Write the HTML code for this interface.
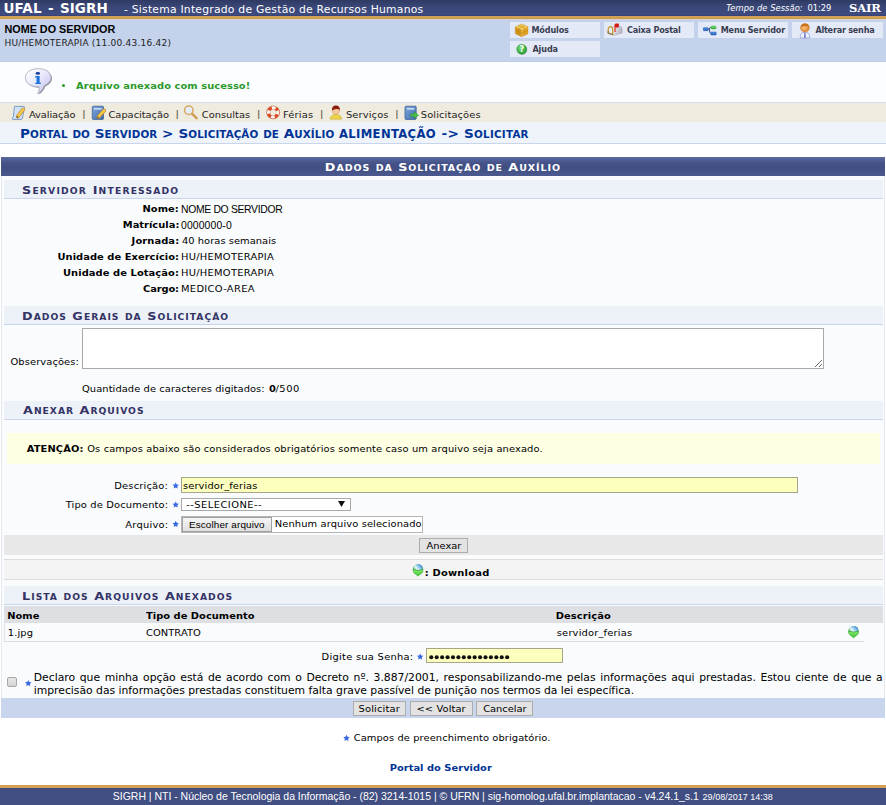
<!DOCTYPE html>
<html lang="pt-br">
<head>
<meta charset="utf-8">
<title>SIGRH - Sistema Integrado de Gestão de Recursos Humanos</title>
<style>
html,body{margin:0;padding:0;}
body{width:886px;height:805px;position:relative;overflow:hidden;background:#fff;
  font-family:"DejaVu Sans","Liberation Sans",sans-serif;font-size:9.9px;color:#000;}
.t{position:absolute;white-space:pre;line-height:1;}
.x{position:absolute;box-sizing:border-box;}
svg{position:absolute;overflow:visible;}
.mb{position:absolute;box-sizing:border-box;width:90px;height:16px;background:#e3e9f6;}
.sub{position:absolute;box-sizing:border-box;left:4px;width:879px;height:19px;background:#edf1f8;border-bottom:1px solid #c8d5ec;}
.btn{position:absolute;box-sizing:border-box;background:#e3e3e3;border:1px solid #adadad;}
.l{font-family:"Liberation Sans","DejaVu Sans",sans-serif;}
.s{font-family:"DejaVu Serif","Liberation Serif",serif;}
.s2{font-family:"Liberation Serif","DejaVu Serif",serif;}
.c{font-family:"DejaVu Sans Condensed","DejaVu Sans",sans-serif;}
.b{font-weight:bold;}
</style>
</head>
<body>
<!-- ===== HEADER ===== -->
<div class="x" style="left:0;top:0;width:886px;height:16px;background:linear-gradient(#2f3a63,#394676 40%,#3d4b81 90%,#36416f);"></div>
<div class="x" style="left:0;top:16px;width:886px;height:3px;background:linear-gradient(#d4a258,#cb9b50);"></div>
<div class="x" style="left:0;top:19px;width:886px;height:1px;background:#d9d3ce;"></div>
<div class="x" style="left:0;top:20px;width:886px;height:42px;background:#c4d2eb;border-bottom:1px solid #bccbe6;"></div>
<div class="mb" style="left:510px;top:22px;"></div>
<div class="mb" style="left:604px;top:22px;"></div>
<div class="mb" style="left:698px;top:22px;"></div>
<div class="mb" style="left:792px;top:22px;width:91px;"></div>
<div class="mb" style="left:510px;top:41px;"></div>

<!-- ===== MESSAGE ===== -->
<div class="x" style="left:0;top:62px;width:886px;height:41px;background:#fcfdff;"></div>
<div class="x" style="left:61.6px;top:83.6px;width:3.6px;height:3.6px;border-radius:50%;background:#2a9a2a;"></div>

<!-- ===== MENU ===== -->
<div class="x" style="left:0;top:102px;width:886px;height:1px;background:#d5dbe8;"></div>
<div class="x" style="left:0;top:103px;width:886px;height:19px;background:#efebde;"></div>
<div class="x" style="left:0;top:122px;width:886px;height:21px;background:#eff3fa;"></div>
<div class="x" style="left:0;top:143px;width:886px;height:1px;background:#c8d5ec;"></div>

<!-- ===== FORM ===== -->
<div class="x" style="left:1px;top:157px;width:884px;height:561px;background:#f9fbfd;border-left:1px solid #e4e8f0;border-right:1px solid #e4e8f0;"></div>
<div class="x" style="left:1px;top:157px;width:884px;height:19px;background:linear-gradient(#5a6a9c 0%,#46548b 30%,#404e82 55%,#4b598f 100%);"></div>
<div class="sub" style="top:180px;"></div>
<div class="sub" style="top:306px;"></div>
<div class="sub" style="top:401px;"></div>
<div class="sub" style="top:586px;"></div>

<textarea class="x" style="left:82px;top:328px;width:742px;height:41px;margin:0;padding:0;border:1px solid #a9a9a9;background:#fff;resize:both;outline:none;" aria-label="Observações"></textarea>

<div class="x" style="left:7px;top:433px;width:873px;height:31px;background:#ffffe4;"></div>

<div class="x" style="left:181px;top:477px;width:617px;height:16px;background:#fdffbf;border:1px solid #a6a68c;"></div>
<div class="x" style="left:181px;top:498px;width:170px;height:13px;background:#fff;border:1px solid #a9a9a9;"></div>
<svg style="left:338px;top:501px;" width="7" height="6" viewBox="0 0 7 6"><path d="M0 0h7L3.5 6z" fill="#111"/></svg>
<div class="x" style="left:181px;top:516px;width:242px;height:17px;background:#fff;border:1px solid #b5b5b5;"></div>
<div class="btn" style="left:182px;top:517px;width:90px;height:15px;background:linear-gradient(#f6f6f6,#dedede);border-color:#a0a0a0;"></div>

<div class="x" style="left:4px;top:535px;width:879px;height:20px;background:#e8e8e8;"></div>
<div class="btn" style="left:419px;top:538px;width:49px;height:15px;"></div>

<div class="x" style="left:4px;top:559px;width:879px;height:21px;background:#f4f4f4;border-top:1px solid #dcdcdc;border-bottom:1px solid #dcdcdc;"></div>

<div class="x" style="left:4px;top:606px;width:879px;height:17px;background:#dedfe3;"></div>
<div class="x" style="left:4px;top:606px;width:1px;height:35px;background:#dfe2ea;"></div>
<div class="x" style="left:4px;top:641px;width:860px;height:1px;background:#d9dde6;"></div>

<div class="x" style="left:426px;top:648px;width:137px;height:15px;background:#fdffbf;border:1px solid #a6a68c;"></div>

<div class="x" style="left:7px;top:677px;width:10px;height:10px;background:linear-gradient(#e6e6e6,#d6d6d6);border:1px solid #a8a8a8;border-radius:2px;"></div>

<div class="x" style="left:1px;top:698px;width:884px;height:20px;background:#c8d5ec;"></div>
<div class="btn" style="left:353px;top:701px;width:53px;height:15px;"></div>
<div class="btn" style="left:410px;top:701px;width:63px;height:15px;"></div>
<div class="btn" style="left:476px;top:701px;width:57px;height:15px;"></div>
<svg width="886" height="805" viewBox="0 0 886 805" style="left:0;top:0;pointer-events:none;" aria-hidden="true"><defs>
<linearGradient id="gGlobe" x1="1" y1="0" x2="0" y2="0.6"><stop offset="0" stop-color="#1560c8"/><stop offset="0.45" stop-color="#7fc0ee"/><stop offset="0.8" stop-color="#e6f5fb"/><stop offset="1" stop-color="#9fd8a8"/></linearGradient>
<linearGradient id="gArrow" x1="0" y1="0" x2="0" y2="1"><stop offset="0" stop-color="#8bee6e"/><stop offset="1" stop-color="#36c036"/></linearGradient>
<radialGradient id="gHelp" cx="0.4" cy="0.35" r="0.7"><stop offset="0" stop-color="#7fe07f"/><stop offset="1" stop-color="#1f9a2a"/></radialGradient>
<linearGradient id="gBub" x1="0" y1="0" x2="1" y2="1"><stop offset="0" stop-color="#ffffff"/><stop offset="0.45" stop-color="#e9eafb"/><stop offset="1" stop-color="#bcbaf0"/></linearGradient>
<radialGradient id="gHead" cx="0.4" cy="0.45" r="0.7"><stop offset="0" stop-color="#f8c078"/><stop offset="1" stop-color="#d87a20"/></radialGradient>
<linearGradient id="gBook" x1="0" y1="0" x2="1" y2="1"><stop offset="0" stop-color="#7fa8dc"/><stop offset="1" stop-color="#3f6cb0"/></linearGradient>
<linearGradient id="gBlue" x1="0" y1="0" x2="0" y2="1"><stop offset="0" stop-color="#5a9ae8"/><stop offset="1" stop-color="#1f5fc0"/></linearGradient>
<linearGradient id="gGreen" x1="0" y1="0" x2="0" y2="1"><stop offset="0" stop-color="#7fe07f"/><stop offset="1" stop-color="#2fae2f"/></linearGradient>
<linearGradient id="gMail" x1="0" y1="0" x2="1" y2="0.3"><stop offset="0" stop-color="#f4f4f8"/><stop offset="1" stop-color="#b4b5c0"/></linearGradient>
</defs>
<g>
<polygon points="521.7,24 528,26.8 521.7,29.8 515.4,26.8" fill="#f6d058"/>
<polygon points="515.4,26.8 521.7,29.8 521.7,36.8 515.4,33.7" fill="#d6961a"/>
<polygon points="528,26.8 521.7,29.8 521.7,36.8 528,33.7" fill="#e6aa28"/>
<path d="M518.5,25.4 L524.9,28.3 M524.9,25.4 L518.5,28.3 M515.4,30.2 L521.7,33.3 L528,30.2 M518.5,28.3 V35.2 M524.9,28.3 V35.2" stroke="#b47d10" stroke-width="0.45" fill="none"/>
<path d="M521.7,24 L528,26.8 V33.7 L521.7,36.8 L515.4,33.7 V26.8 Z" fill="none" stroke="#b8820f" stroke-width="0.4"/>
</g>
<g>
<path d="M612.4,28.4 Q612.8,26.2 615.6,26.2 L619.4,26.2 Q622.1,26.4 622.1,29.2 V33 L614,35.3 L612.4,34.2 Z" fill="url(#gMail)" stroke="#9c9ca8" stroke-width="0.5"/>
<path d="M608.2,29.6 Q608.2,26.6 610.4,26.6 Q612.7,26.8 612.7,29.8 V34.7 L608.2,33 Z" fill="#e6ecf8" stroke="#c29a34" stroke-width="1.2" stroke-linejoin="round"/>
<path d="M608.2,31 V33 L612.7,34.7" fill="none" stroke="#85733c" stroke-width="1.2" stroke-linejoin="round"/>
<rect x="614.2" y="24.4" width="1.6" height="7.6" fill="#e65a4c"/>
<rect x="615" y="23.4" width="3.9" height="4" rx="0.8" fill="#cf1d12"/>
</g>
<g>
<path d="M708,29.1 H709.3 Q709.6,27.4 710.8,27.4 M709.3,29.1 Q709.6,33.5 710.8,33.5" stroke="#33488a" stroke-width="1" fill="none"/>
<rect x="703.3" y="27.6" width="4.8" height="3.1" rx="0.6" fill="url(#gBlue)" stroke="#1d4fa0" stroke-width="0.4"/>
<rect x="710.7" y="26" width="5.5" height="3" rx="1.5" fill="url(#gGreen)" stroke="#2a9a2a" stroke-width="0.4"/>
<rect x="710.7" y="32" width="5.5" height="3.1" rx="0.6" fill="url(#gBlue)" stroke="#1d4fa0" stroke-width="0.4"/>
</g>
<g>
<path d="M800.2,38 Q800.2,33 803,32.6 L806.8,32.6 Q809.7,33 809.7,38 Z" fill="#f2f3fb" stroke="#8a94d8" stroke-width="0.7"/>
<path d="M804.3,33 L805.5,33 L805.9,37.8 L803.9,37.8 Z" fill="#6a78d0"/>
<ellipse cx="804.9" cy="27.9" rx="4.4" ry="4.2" fill="url(#gHead)" stroke="#b5651a" stroke-width="0.4"/>
<path d="M800.6,27.2 Q801,23.6 804.9,23.6 Q808.9,23.6 809.3,27 Q806,24.8 800.6,27.2 Z" fill="#c8721c"/>
</g>
<g>
<circle cx="522.3" cy="50" r="5" fill="#9aa0a8" opacity="0.6"/>
<circle cx="521.7" cy="49.3" r="4.9" fill="url(#gHelp)" stroke="#1f8a28" stroke-width="0.5"/>
<text x="521.7" y="52.3" text-anchor="middle" font-family="'DejaVu Sans','Liberation Sans',sans-serif" font-weight="bold" font-size="8" fill="#ffffff">?</text>
</g>
<g transform="translate(38.2 78) scale(0.955) translate(-38.4 -78)">
<path d="M39.4,69.1 C47.8,69.1 52.8,73.2 52.8,78.4 C52.8,82.2 49.6,85.2 46,86.6 C44.6,90.6 42,93.6 38.8,95.4 C40.4,92.6 40.8,90 40.2,88.2 C31.6,88.4 26,84 26,78.6 C26,73 31.4,69.1 39.4,69.1 Z" fill="#7f7f8a" opacity="0.85"/>
<path d="M38.4,68.2 C46.8,68.2 51.8,72.3 51.8,77.5 C51.8,81.3 48.6,84.3 45,85.7 C43.6,89.7 41,92.7 37.8,94.5 C39.4,91.7 39.8,89.1 39.2,87.3 C30.6,87.5 25,83.1 25,77.7 C25,72.1 30.4,68.2 38.4,68.2 Z" fill="url(#gBub)" stroke="#a2a4b2" stroke-width="0.8"/>
<ellipse cx="38" cy="73.2" rx="2.4" ry="1.5" fill="#173f9e"/>
<path d="M35.3,76 H39.9 V82.9 H41.2 V84.4 H35.3 V82.9 H36.7 V77.5 H35.3 Z" fill="#1c72dc"/>
</g>
<g><path d="M14.6,106.4 L23.6,106.4 Q24.6,106.4 24.4,107.6 L22.4,118.2 Q22.2,119.4 21,119.4 L12.6,119.4 Q11.8,119.2 12.4,118 L13.4,116.6 L14.4,107 Z" fill="#d3e3f7" stroke="#6f92c4" stroke-width="0.9"/><line x1="23.2" y1="109.4" x2="17.8" y2="116.4" stroke="#b8862a" stroke-width="3.8" stroke-linecap="round"/><line x1="23.2" y1="109.4" x2="17.8" y2="116.4" stroke="#f3c84e" stroke-width="2.6" stroke-linecap="round"/><circle cx="17.400000000000002" cy="116.9" r="0.9" fill="#6b5a45"/></g>
<g><rect x="92.3" y="106.2" width="11.2" height="13.2" rx="1" fill="url(#gBook)" stroke="#2f5590" stroke-width="0.7"/><rect x="94" y="108" width="7.8" height="1.6" fill="#c9dcf4"/><line x1="104.2" y1="110.4" x2="98.4" y2="117" stroke="#b8862a" stroke-width="3.8" stroke-linecap="round"/><line x1="104.2" y1="110.4" x2="98.4" y2="117" stroke="#f3c84e" stroke-width="2.6" stroke-linecap="round"/><circle cx="98.0" cy="117.5" r="0.9" fill="#6b5a45"/></g>
<g>
<line x1="192.2" y1="113.8" x2="196.6" y2="118.2" stroke="#cf9e58" stroke-width="2.6" stroke-linecap="round"/>
<circle cx="188.8" cy="110.2" r="4.2" fill="#e4effb" stroke="#d7a864" stroke-width="1.5"/>
</g>
<g>
<circle cx="273.1" cy="112.4" r="4.7" fill="none" stroke="#da4d24" stroke-width="3.6"/>
<circle cx="273.1" cy="112.4" r="4.7" fill="none" stroke="#fbf4f0" stroke-width="3.2" stroke-dasharray="3.69 3.69" transform="rotate(-22.5 273.1 112.4)"/>
<circle cx="273.1" cy="112.4" r="6.5" fill="none" stroke="#b7401e" stroke-width="0.4"/>
</g>
<g>
<path d="M330.2,119.2 Q330.4,114.6 335.9,114.4 Q341.4,114.6 341.7,119.2 Z" fill="#ecd548" stroke="#b8a226" stroke-width="0.5"/>
<circle cx="335.9" cy="110.6" r="3.7" fill="#f7c99a" stroke="#c98a50" stroke-width="0.4"/>
<path d="M332,110.4 Q331.6,105.4 335.9,105.4 Q340.2,105.4 339.8,110.4 Q338,107.6 332,110.4 Z" fill="#8e1d12"/>
</g>
<g>
<rect x="405" y="106.2" width="11.2" height="13.2" rx="1" fill="url(#gBook)" stroke="#2f5590" stroke-width="0.7"/>
<rect x="406.8" y="108" width="7.6" height="1.6" fill="#c9dcf4"/>
<path d="M410.4,114 H414.2 V111.8 L418.6,115.2 L414.2,118.6 V116.4 H410.4 Z" fill="#49c049" stroke="#2a8f2a" stroke-width="0.5" stroke-linejoin="round"/>
</g>
<polygon points="175.70,482.40 176.70,484.42 178.93,484.75 177.32,486.33 177.70,488.55 175.70,487.50 173.70,488.55 174.08,486.33 172.47,484.75 174.70,484.42" fill="#3b6ae0"/>
<polygon points="175.70,501.40 176.70,503.42 178.93,503.75 177.32,505.33 177.70,507.55 175.70,506.50 173.70,507.55 174.08,505.33 172.47,503.75 174.70,503.42" fill="#3b6ae0"/>
<polygon points="175.70,520.80 176.70,522.82 178.93,523.15 177.32,524.73 177.70,526.95 175.70,525.90 173.70,526.95 174.08,524.73 172.47,523.15 174.70,522.82" fill="#3b6ae0"/>
<polygon points="420.20,653.40 421.20,655.42 423.43,655.75 421.82,657.33 422.20,659.55 420.20,658.50 418.20,659.55 418.58,657.33 416.97,655.75 419.20,655.42" fill="#3b6ae0"/>
<polygon points="28.30,680.00 29.30,682.02 31.53,682.35 29.92,683.93 30.30,686.15 28.30,685.10 26.30,686.15 26.68,683.93 25.07,682.35 27.30,682.02" fill="#3b6ae0"/>
<polygon points="346.50,734.80 347.50,736.82 349.73,737.15 348.12,738.73 348.50,740.95 346.50,739.90 344.50,740.95 344.88,738.73 343.27,737.15 345.50,736.82" fill="#3b6ae0"/>
<g transform="translate(418.05,570.3) scale(1.0)"><circle cx="0" cy="-0.8" r="5.2" fill="#37a047"/><path d="M-4.3,-3.8 A5.2,5.2 0 0 1 4.3,-3.8 Q4.6,-2.4 4,-1 Q0,0.5 -4,-1 Q-4.6,-2.4 -4.3,-3.8 Z" fill="url(#gGlobe)"/><path d="M-4.9,-0.5 Q0,0.9 4.9,-0.5 L4.9,1.6 L0,5.9 L-4.9,1.6 Z" fill="url(#gArrow)" stroke="#35a835" stroke-width="0.4" stroke-linejoin="round"/></g>
<g transform="translate(853.55,632.0) scale(1.0)"><circle cx="0" cy="-0.8" r="5.2" fill="#37a047"/><path d="M-4.3,-3.8 A5.2,5.2 0 0 1 4.3,-3.8 Q4.6,-2.4 4,-1 Q0,0.5 -4,-1 Q-4.6,-2.4 -4.3,-3.8 Z" fill="url(#gGlobe)"/><path d="M-4.9,-0.5 Q0,0.9 4.9,-0.5 L4.9,1.6 L0,5.9 L-4.9,1.6 Z" fill="url(#gArrow)" stroke="#35a835" stroke-width="0.4" stroke-linejoin="round"/></g>
<g><circle cx="431.30" cy="657.2" r="2.05" fill="#111"/><circle cx="436.72" cy="657.2" r="2.05" fill="#111"/><circle cx="442.14" cy="657.2" r="2.05" fill="#111"/><circle cx="447.56" cy="657.2" r="2.05" fill="#111"/><circle cx="452.98" cy="657.2" r="2.05" fill="#111"/><circle cx="458.40" cy="657.2" r="2.05" fill="#111"/><circle cx="463.82" cy="657.2" r="2.05" fill="#111"/><circle cx="469.24" cy="657.2" r="2.05" fill="#111"/><circle cx="474.66" cy="657.2" r="2.05" fill="#111"/><circle cx="480.08" cy="657.2" r="2.05" fill="#111"/><circle cx="485.50" cy="657.2" r="2.05" fill="#111"/><circle cx="490.92" cy="657.2" r="2.05" fill="#111"/><circle cx="496.34" cy="657.2" r="2.05" fill="#111"/><circle cx="501.76" cy="657.2" r="2.05" fill="#111"/><circle cx="507.18" cy="657.2" r="2.05" fill="#111"/></g></svg>

<!-- ===== FOOTER ===== -->
<div class="x" style="left:0;top:785px;width:886px;height:3px;background:#d39f52;"></div>
<div class="x" style="left:0;top:788px;width:886px;height:17px;background:#404e82;"></div>

<!-- ===== TEXT ===== -->
<span class="t b" style="left:3.5px;top:2px;font-size:13.5px;letter-spacing:0.100px;word-spacing:1.500px;color:#fff;">UFAL - SIGRH</span>
<span class="t" style="left:124.0px;top:5px;font-size:10.8px;letter-spacing:0.219px;color:#fff;">- Sistema Integrado de Gestão de Recursos Humanos</span>
<span class="t" style="left:726.2px;top:4px;font-size:8.3px;font-style:italic;letter-spacing:0.080px;color:#fff;">Tempo de Sessão:</span>
<span class="t" style="left:807.4px;top:4px;font-size:8.3px;color:#fff;">01:29</span>
<span class="t s b" style="left:849.0px;top:3px;font-size:11.6px;letter-spacing:-0.167px;transform:scaleY(0.9);transform-origin:0 9.0px;color:#fff;">SAIR</span>
<span class="t l b" style="left:4.5px;top:24px;font-size:10.8px;letter-spacing:-0.007px;color:#000;">NOME DO SERVIDOR</span>
<span class="t" style="left:4.5px;top:39px;font-size:9px;letter-spacing:0.223px;color:#222;">HU/HEMOTERAPIA (11.00.43.16.42)</span>
<span class="t b" style="left:531.4px;top:26px;font-size:8.1px;letter-spacing:-0.133px;color:#3a3e52;">Módulos</span>
<span class="t b" style="left:627.0px;top:26px;font-size:8.1px;letter-spacing:-0.200px;color:#3a3e52;">Caixa Postal</span>
<span class="t b" style="left:720.7px;top:26px;font-size:8.1px;letter-spacing:-0.175px;color:#3a3e52;">Menu Servidor</span>
<span class="t b" style="left:815.4px;top:26px;font-size:8.1px;letter-spacing:-0.225px;color:#3a3e52;">Alterar senha</span>
<span class="t b" style="left:532.4px;top:45px;font-size:8.1px;letter-spacing:-0.100px;color:#3a3e52;">Ajuda</span>
<span class="t b" style="left:76.0px;top:81px;font-size:9.9px;letter-spacing:0.074px;transform:scaleY(0.91);transform-origin:0 8.0px;color:#2a9a2a;">Arquivo anexado com sucesso!</span>
<span class="t" style="left:29.0px;top:110px;font-size:9.9px;letter-spacing:-0.088px;transform:scaleY(0.9);transform-origin:0 8.0px;color:#222;">Avaliação</span>
<span class="t" style="left:82.2px;top:109px;font-size:9.9px;transform:scaleY(0.91);transform-origin:0 8.0px;color:#4a4438;">|</span>
<span class="t" style="left:108.5px;top:110px;font-size:9.9px;letter-spacing:-0.030px;transform:scaleY(0.9);transform-origin:0 8.0px;color:#222;">Capacitação</span>
<span class="t" style="left:175.6px;top:109px;font-size:9.9px;transform:scaleY(0.91);transform-origin:0 8.0px;color:#4a4438;">|</span>
<span class="t" style="left:201.8px;top:110px;font-size:9.9px;letter-spacing:-0.013px;transform:scaleY(0.9);transform-origin:0 8.0px;color:#222;">Consultas</span>
<span class="t" style="left:257.0px;top:109px;font-size:9.9px;transform:scaleY(0.91);transform-origin:0 8.0px;color:#4a4438;">|</span>
<span class="t" style="left:283.0px;top:110px;font-size:9.9px;letter-spacing:0.200px;transform:scaleY(0.9);transform-origin:0 8.0px;color:#222;">Férias</span>
<span class="t" style="left:320.0px;top:109px;font-size:9.9px;transform:scaleY(0.91);transform-origin:0 8.0px;color:#4a4438;">|</span>
<span class="t" style="left:345.9px;top:110px;font-size:9.9px;letter-spacing:0.143px;transform:scaleY(0.9);transform-origin:0 8.0px;color:#222;">Serviços</span>
<span class="t" style="left:395.2px;top:109px;font-size:9.9px;transform:scaleY(0.91);transform-origin:0 8.0px;color:#4a4438;">|</span>
<span class="t" style="left:420.8px;top:110px;font-size:9.9px;letter-spacing:0.109px;transform:scaleY(0.9);transform-origin:0 8.0px;color:#222;">Solicitações</span>
<span class="t b" style="left:20.0px;top:127px;font-size:13.6px;text-transform:uppercase;letter-spacing:0.081px;transform:scaleY(0.95);transform-origin:0 11.0px;color:#003395;">P<span style="font-size:0.76em">ortal</span> <span style="font-size:0.76em">do</span> S<span style="font-size:0.76em">ervidor</span> &gt; S<span style="font-size:0.76em">olicitação</span> <span style="font-size:0.76em">de</span> A<span style="font-size:0.76em">uxílio</span></span>
<span class="t c b" style="left:339.0px;top:128px;font-size:12.9px;letter-spacing:0.350px;color:#003395;">ALIMENTAÇÃO</span>
<span class="t b" style="left:441.6px;top:127px;font-size:13.6px;text-transform:uppercase;letter-spacing:0.236px;transform:scaleY(0.95);transform-origin:0 11.0px;color:#003395;">-&gt; S<span style="font-size:0.76em">olicitar</span></span>
<span class="t b" style="left:324.8px;top:161px;font-size:12.8px;text-transform:uppercase;letter-spacing:0.950px;transform:scaleY(0.86);transform-origin:0 10.0px;color:#fff;">D<span style="font-size:0.74em">ados</span> <span style="font-size:0.74em">da</span> S<span style="font-size:0.74em">olicitação</span> <span style="font-size:0.74em">de</span> A<span style="font-size:0.74em">uxílio</span></span>
<span class="t b" style="left:22.0px;top:184px;font-size:12.8px;text-transform:uppercase;letter-spacing:1.168px;transform:scaleY(0.88);transform-origin:0 10.0px;color:#333366;">S<span style="font-size:0.72em">ervidor</span> I<span style="font-size:0.72em">nteressado</span></span>
<span class="t b" style="left:22.0px;top:310px;font-size:12.8px;text-transform:uppercase;letter-spacing:1.008px;transform:scaleY(0.88);transform-origin:0 10.0px;color:#333366;">D<span style="font-size:0.72em">ados</span> G<span style="font-size:0.72em">erais</span> <span style="font-size:0.72em">da</span> S<span style="font-size:0.72em">olicitação</span></span>
<span class="t b" style="left:23.0px;top:404px;font-size:12.8px;text-transform:uppercase;letter-spacing:0.979px;transform:scaleY(0.88);transform-origin:0 10.0px;color:#333366;">A<span style="font-size:0.72em">nexar</span> A<span style="font-size:0.72em">rquivos</span></span>
<span class="t b" style="left:22.0px;top:590px;font-size:12.8px;text-transform:uppercase;letter-spacing:1.019px;transform:scaleY(0.88);transform-origin:0 10.0px;color:#333366;">L<span style="font-size:0.72em">ista</span> <span style="font-size:0.72em">dos</span> A<span style="font-size:0.72em">rquivos</span> A<span style="font-size:0.72em">nexados</span></span>
<span class="t b" style="left:142.4px;top:204px;font-size:9.9px;letter-spacing:0.100px;transform:scaleY(0.91);transform-origin:0 8.0px;">Nome:</span>
<span class="t b" style="left:122.8px;top:220px;font-size:9.9px;letter-spacing:0.022px;transform:scaleY(0.91);transform-origin:0 8.0px;">Matrícula:</span>
<span class="t b" style="left:131.6px;top:236px;font-size:9.9px;letter-spacing:0.114px;transform:scaleY(0.91);transform-origin:0 8.0px;">Jornada:</span>
<span class="t b" style="left:57.5px;top:252px;font-size:9.9px;letter-spacing:0.055px;transform:scaleY(0.91);transform-origin:0 8.0px;">Unidade de Exercício:</span>
<span class="t b" style="left:63.0px;top:268px;font-size:9.9px;letter-spacing:0.089px;transform:scaleY(0.91);transform-origin:0 8.0px;">Unidade de Lotação:</span>
<span class="t b" style="left:143.1px;top:284px;font-size:9.9px;letter-spacing:-0.140px;transform:scaleY(0.91);transform-origin:0 8.0px;">Cargo:</span>
<span class="t l" style="left:181.0px;top:205px;font-size:10.4px;letter-spacing:-0.327px;">NOME DO SERVIDOR</span>
<span class="t l" style="left:181.0px;top:221px;font-size:10.4px;letter-spacing:0.125px;">0000000-0</span>
<span class="t" style="left:182.0px;top:236px;font-size:9.9px;letter-spacing:0.037px;transform:scaleY(0.91);transform-origin:0 8.0px;">40 horas semanais</span>
<span class="t" style="left:181.0px;top:252px;font-size:9.9px;letter-spacing:0.277px;transform:scaleY(0.91);transform-origin:0 8.0px;">HU/HEMOTERAPIA</span>
<span class="t" style="left:181.0px;top:268px;font-size:9.9px;letter-spacing:0.277px;transform:scaleY(0.91);transform-origin:0 8.0px;">HU/HEMOTERAPIA</span>
<span class="t" style="left:181.0px;top:284px;font-size:9.9px;letter-spacing:0.330px;transform:scaleY(0.91);transform-origin:0 8.0px;">MEDICO-AREA</span>
<span class="t" style="left:10.5px;top:357px;font-size:9.9px;letter-spacing:0.100px;transform:scaleY(0.91);transform-origin:0 8.0px;">Observações:</span>
<span class="t" style="left:82.0px;top:384px;font-size:9.9px;letter-spacing:0.074px;transform:scaleY(0.91);transform-origin:0 8.0px;">Quantidade de caracteres digitados:</span>
<span class="t b" style="left:269.0px;top:384px;font-size:9.9px;transform:scaleY(0.91);transform-origin:0 8.0px;">0</span>
<span class="t" style="left:275.4px;top:384px;font-size:9.9px;letter-spacing:0.600px;transform:scaleY(0.91);transform-origin:0 8.0px;">/500</span>
<span class="t b" style="left:26.8px;top:444px;font-size:9.9px;letter-spacing:0.100px;transform:scaleY(0.91);transform-origin:0 8.0px;">ATENÇÃO:</span>
<span class="t" style="left:87.2px;top:444px;font-size:9.9px;letter-spacing:0.127px;transform:scaleY(0.91);transform-origin:0 8.0px;">Os campos abaixo são considerados obrigatórios somente caso um arquivo seja anexado.</span>
<span class="t" style="left:114.3px;top:481px;font-size:9.9px;letter-spacing:0.189px;transform:scaleY(0.91);transform-origin:0 8.0px;">Descrição:</span>
<span class="t" style="left:65.7px;top:500px;font-size:9.9px;letter-spacing:0.147px;transform:scaleY(0.91);transform-origin:0 8.0px;">Tipo de Documento:</span>
<span class="t" style="left:125.3px;top:520px;font-size:9.9px;letter-spacing:0.243px;transform:scaleY(0.91);transform-origin:0 8.0px;">Arquivo:</span>
<span class="t" style="left:183.0px;top:481px;font-size:9.9px;letter-spacing:0.114px;transform:scaleY(0.91);transform-origin:0 8.0px;">servidor_ferias</span>
<span class="t" style="left:186.3px;top:500px;font-size:9.9px;letter-spacing:0.467px;transform:scaleY(0.91);transform-origin:0 8.0px;">--SELECIONE--</span>
<span class="t l" style="left:189.0px;top:520px;font-size:9.9px;letter-spacing:0.133px;">Escolher arquivo</span>
<span class="t" style="left:274.8px;top:519px;font-size:9.9px;letter-spacing:0.108px;transform:scaleY(0.91);transform-origin:0 8.0px;">Nenhum arquivo selecionado</span>
<span class="t" style="left:426.5px;top:541px;font-size:9.9px;transform:scaleY(0.91);transform-origin:0 8.0px;">Anexar</span>
<span class="t b" style="left:424.7px;top:568px;font-size:9.9px;letter-spacing:0.233px;transform:scaleY(0.91);transform-origin:0 8.0px;">: Download</span>
<span class="t b" style="left:7.3px;top:611px;font-size:9.9px;transform:scaleY(0.91);transform-origin:0 8.0px;">Nome</span>
<span class="t b" style="left:146.0px;top:611px;font-size:9.9px;letter-spacing:0.031px;transform:scaleY(0.91);transform-origin:0 8.0px;">Tipo de Documento</span>
<span class="t b" style="left:555.8px;top:611px;font-size:9.9px;letter-spacing:0.088px;transform:scaleY(0.91);transform-origin:0 8.0px;">Descrição</span>
<span class="t" style="left:7.8px;top:628px;font-size:9.9px;letter-spacing:0.100px;transform:scaleY(0.91);transform-origin:0 8.0px;">1.jpg</span>
<span class="t" style="left:146.0px;top:628px;font-size:9.9px;letter-spacing:0.071px;transform:scaleY(0.91);transform-origin:0 8.0px;">CONTRATO</span>
<span class="t" style="left:556.8px;top:628px;font-size:9.9px;letter-spacing:0.179px;transform:scaleY(0.91);transform-origin:0 8.0px;">servidor_ferias</span>
<span class="t" style="left:321.6px;top:652px;font-size:9.9px;letter-spacing:0.269px;transform:scaleY(0.91);transform-origin:0 8.0px;">Digite sua Senha:</span>
<span class="t" style="left:33.8px;top:673px;font-size:10.8px;word-spacing:1.162px;">Declaro que minha opção está de acordo com o Decreto nº. 3.887/2001, responsabilizando-me pelas informações aqui prestadas. Estou ciente de que a</span>
<span class="t" style="left:33.8px;top:686px;font-size:10.8px;letter-spacing:-0.016px;">imprecisão das informações prestadas constituem falta grave passível de punição nos termos da lei específica.</span>
<span class="t" style="left:358.6px;top:704px;font-size:9.9px;letter-spacing:0.150px;transform:scaleY(0.91);transform-origin:0 8.0px;">Solicitar</span>
<span class="t" style="left:416.5px;top:704px;font-size:9.9px;letter-spacing:0.087px;transform:scaleY(0.91);transform-origin:0 8.0px;">&lt;&lt; Voltar</span>
<span class="t" style="left:483.2px;top:704px;font-size:9.9px;letter-spacing:-0.014px;transform:scaleY(0.91);transform-origin:0 8.0px;">Cancelar</span>
<span class="t" style="left:353.7px;top:733px;font-size:9.9px;letter-spacing:0.086px;transform:scaleY(0.91);transform-origin:0 8.0px;">Campos de preenchimento obrigatório.</span>
<span class="t b" style="left:389.7px;top:763px;font-size:9.9px;letter-spacing:0.029px;transform:scaleY(0.91);transform-origin:0 8.0px;color:#003395;">Portal do Servidor</span>
<span class="t l" style="left:112.8px;top:791px;font-size:10.5px;letter-spacing:-0.019px;transform:scaleY(1.08);transform-origin:0 9.0px;color:#fff;">SIGRH | NTI - Núcleo de Tecnologia da Informação - (82) 3214-1015 | © UFRN | sig-homolog.ufal.br.implantacao - v4.24.1_s.1</span>
<span class="t l" style="left:702.6px;top:793px;font-size:9px;letter-spacing:0.013px;color:#fff;">29/08/2017 14:38</span>
</body>
</html>
